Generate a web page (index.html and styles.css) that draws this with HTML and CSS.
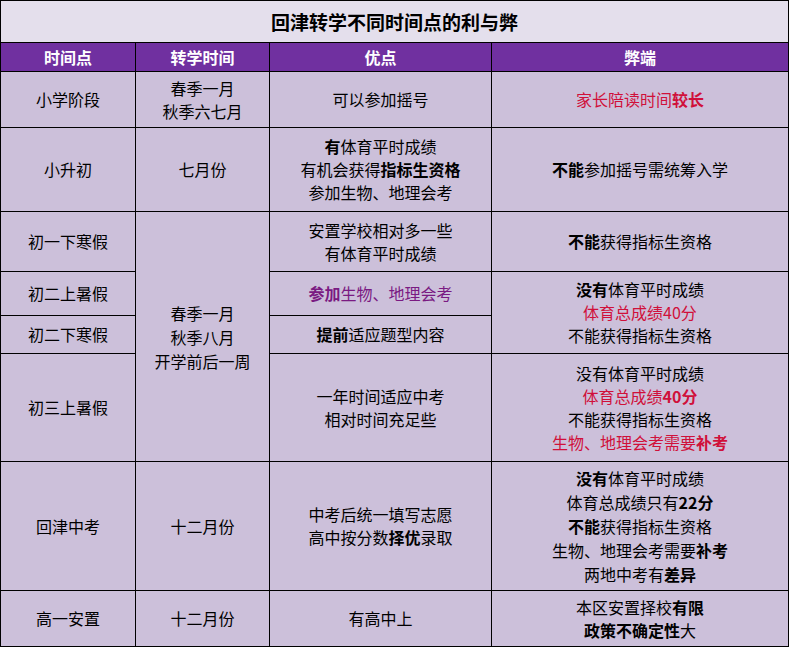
FILE: index.html
```html
<!DOCTYPE html>
<html lang="zh-CN">
<head>
<meta charset="utf-8">
<title>回津转学不同时间点的利与弊</title>
<link rel="stylesheet" href="styles.css">
</head>
<body>
<div class="sheet">
  <div class="cell title">回津转学不同时间点的利与弊</div>

  <div class="cell head">时间点</div>
  <div class="cell head">转学时间</div>
  <div class="cell head">优点</div>
  <div class="cell head">弊端</div>

  <div class="cell">小学阶段</div>
  <div class="cell"><p>春季一月</p><p>秋季六七月</p></div>
  <div class="cell">可以参加摇号</div>
  <div class="cell red"><p>家长陪读时间<b>较长</b></p></div>

  <div class="cell">小升初</div>
  <div class="cell">七月份</div>
  <div class="cell"><p><b>有</b>体育平时成绩</p><p>有机会获得<b>指标生资格</b></p><p>参加生物、地理会考</p></div>
  <div class="cell"><p><b>不能</b>参加摇号需统筹入学</p></div>

  <div class="cell">初一下寒假</div>
  <div class="cell span-time"><p>春季一月</p><p>秋季八月</p><p>开学前后一周</p></div>
  <div class="cell"><p>安置学校相对多一些</p><p>有体育平时成绩</p></div>
  <div class="cell"><p><b>不能</b>获得指标生资格</p></div>

  <div class="cell">初二上暑假</div>
  <div class="cell purple"><p><b>参加</b>生物、地理会考</p></div>
  <div class="cell span-con"><p><b>没有</b>体育平时成绩</p><p class="red">体育总成绩40分</p><p>不能获得指标生资格</p></div>

  <div class="cell">初二下寒假</div>
  <div class="cell"><p><b>提前</b>适应题型内容</p></div>

  <div class="cell">初三上暑假</div>
  <div class="cell"><p>一年时间适应中考</p><p>相对时间充足些</p></div>
  <div class="cell"><p>没有体育平时成绩</p><p class="red">体育总成绩<b>40分</b></p><p>不能获得指标生资格</p><p class="red">生物、地理会考需要<b>补考</b></p></div>

  <div class="cell">回津中考</div>
  <div class="cell">十二月份</div>
  <div class="cell"><p>中考后统一填写志愿</p><p>高中按分数<b>择优</b>录取</p></div>
  <div class="cell tall"><p><b>没有</b>体育平时成绩</p><p>体育总成绩只有<b>22分</b></p><p><b>不能</b>获得指标生资格</p><p>生物、地理会考需要<b>补考</b></p><p>两地中考有<b>差异</b></p></div>

  <div class="cell">高一安置</div>
  <div class="cell">十二月份</div>
  <div class="cell">有高中上</div>
  <div class="cell"><p>本区安置择校<b>有限</b></p><p><b>政策不确定性</b>大</p></div>
</div>
</body>
</html>
```

FILE: styles.css
```css
html, body {
  margin: 0;
  padding: 0;
  background: #ffffff;
}

body {
  font-family: "Noto Sans CJK SC", "Microsoft YaHei", sans-serif;
  font-size: 16px;
  color: #000000;
}

.sheet {
  width: 789px;
  box-sizing: border-box;
  display: grid;
  grid-template-columns: 134px 133px 221px 296px;
  grid-template-rows: 41px 28px 55px 83px 59px 43px 37px 107px 128px 55px;
  gap: 1px;
  padding: 1px;
  background: #000000;
}

.cell {
  background: #ccc0da;
  display: flex;
  flex-direction: column;
  align-items: center;
  justify-content: center;
  text-align: center;
  line-height: 23px;
  white-space: nowrap;
}

.cell p {
  margin: 0;
}

.cell b {
  font-weight: 700;
}

.title {
  grid-column: 1 / 5;
  background: #e4dfec;
  font-size: 19px;
  font-weight: 700;
}

.head {
  background: #7030a0;
  color: #ffffff;
  font-weight: 700;
}

.span-time {
  grid-row: 5 / 9;
  grid-column: 2;
  line-height: 24px;
}

.span-con {
  grid-row: 6 / 8;
  grid-column: 4;
}

.tall {
  line-height: 24px;
}

.red {
  color: #d0103a;
}

.purple {
  color: #7a1a82;
}
```
